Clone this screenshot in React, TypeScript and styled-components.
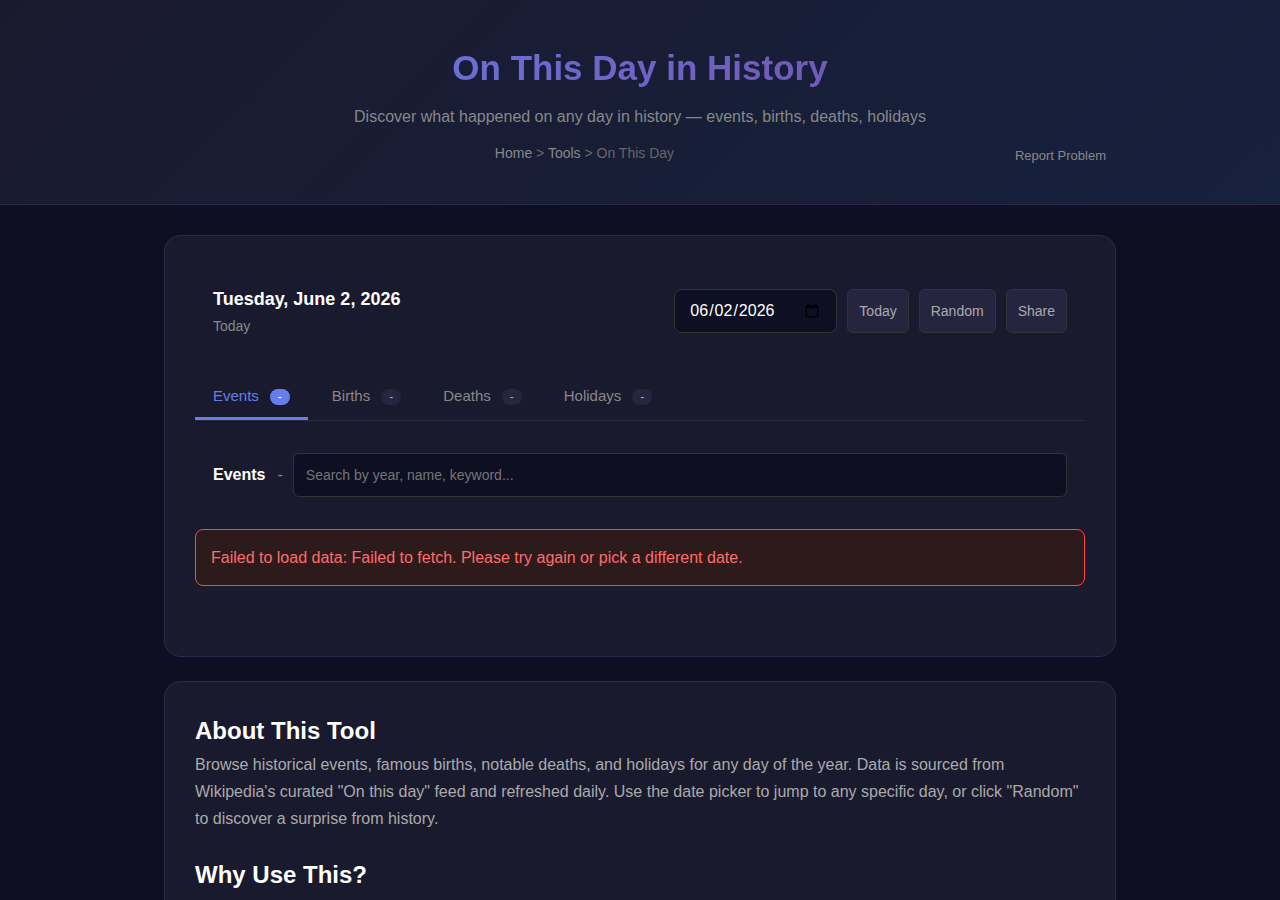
import React, { useState } from "react";
import styled, { createGlobalStyle } from "styled-components";

const GlobalStyle = createGlobalStyle`
  *, *::before, *::after { box-sizing: border-box; margin: 0; padding: 0; }
  html { background: #0f0f23; }
  body {
    font-family: "Liberation Sans", Arial, sans-serif;
    font-size: 16px;
    line-height: 26px;
    color: #fff;
    background: #0f0f23;
  }
  button, input { font-family: inherit; }
`;

const Header = styled.header`
  padding: 40px 24px;
  background: linear-gradient(135deg, #1a1a2e 0%, #16213e 100%);
  border-bottom: 1px solid #2a2a4a;
  text-align: center;
`;

const HeaderInner = styled.div`
  max-width: 952px;
  margin: 0 auto;
`;

const Title = styled.h1`
  font-size: 35px;
  line-height: 56px;
  background: linear-gradient(135deg, #667eea 0%, #764ba2 100%);
  -webkit-background-clip: text;
  background-clip: text;
  color: transparent;
`;

const Subtitle = styled.p`
  margin-top: 8px;
  color: #888;
`;

const HeaderRow = styled.div`
  display: flex;
  align-items: flex-end;
  margin-top: 12px;
`;

const Breadcrumb = styled.nav`
  flex: 1;
  font-size: 14px;
  line-height: 22px;
  color: #666;
`;

const CrumbLink = styled.a`
  color: #888;
  text-decoration: none;
`;

const ReportButton = styled.button`
  padding: 0 10px;
  border: 0;
  background: none;
  font-size: 13px;
  line-height: 16px;
  color: #888;
  cursor: pointer;
`;

const Main = styled.main`
  display: flex;
  flex-direction: column;
  gap: 24px;
  max-width: 1000px;
  margin: 0 auto;
  padding: 30px 24px;
`;

const Card = styled.section`
  padding: 30px;
  background: #1a1a2e;
  border: 1px solid #2a2a4a;
  border-radius: 16px;
`;

const DateBar = styled.div`
  display: flex;
  flex-wrap: wrap;
  align-items: center;
  justify-content: space-between;
  gap: 10px;
  padding: 18px;
`;

const DateHeading = styled.h2`
  font-size: 18px;
  line-height: 30px;
`;

const DateNote = styled.p`
  font-size: 14px;
  line-height: 24px;
  color: #888;
`;

const Controls = styled.div`
  display: flex;
  gap: 10px;
`;

const DateInput = styled.input`
  height: 44px;
  padding: 0 14px;
  background: #0f0f23;
  border: 1px solid #333;
  border-radius: 8px;
  font-size: 16px;
  color: #fff;
`;

const ActionButton = styled.button`
  height: 44px;
  padding: 0 11px;
  background: #252540;
  border: 1px solid #333;
  border-radius: 6px;
  font-size: 14px;
  color: #aaa;
  cursor: pointer;
`;

const TabList = styled.div`
  display: flex;
  gap: 6px;
  margin-top: 16px;
  border-bottom: 1px solid #2a2a3e;
`;

const Tab = styled.button<{ $active: boolean }>`
  display: flex;
  align-items: baseline;
  gap: 11px;
  height: 48px;
  padding: 15px 18px 0;
  background: none;
  border: 0;
  border-bottom: 3px solid ${(p) => (p.$active ? "#667eea" : "transparent")};
  font-size: 15px;
  color: ${(p) => (p.$active ? "#667eea" : "#888")};
  cursor: pointer;
`;

const Badge = styled.span<{ $active: boolean }>`
  padding: 0 8px;
  border-radius: 10px;
  font-size: 12px;
  line-height: 16px;
  background: ${(p) => (p.$active ? "#667eea" : "#252540")};
  color: ${(p) => (p.$active ? "#fff" : "#aaa")};
`;

const FilterRow = styled.div`
  display: flex;
  align-items: center;
  gap: 10px;
  padding: 32px 18px;
`;

const FilterLabel = styled.label`
  font-weight: 700;
  white-space: nowrap;
`;

const FilterCount = styled.span`
  margin-left: 12px;
  font-size: 16px;
  font-weight: 400;
  color: #888;
`;

const SearchInput = styled.input`
  flex: 1;
  min-width: 0;
  height: 44px;
  padding: 0 12px;
  background: #0f0f23;
  border: 1px solid #333;
  border-radius: 6px;
  font-size: 14px;
  color: #fff;

  &::placeholder { color: #757575; }
`;

const ErrorMessage = styled.div`
  margin-bottom: 40px;
  padding: 15px;
  background: #2d1b1b;
  border: 1px solid #ff4444;
  border-radius: 8px;
  line-height: 25px;
  color: #ff6b6b;
`;

const SectionHeading = styled.h2`
  font-size: 24px;
  line-height: 38px;
`;

const Paragraph = styled.p`
  margin: 1px 0 24px;
  line-height: 27px;
  color: #aaa;
`;

const TABS = ["Events", "Births", "Deaths", "Holidays"];

export default function App() {
  const [active, setActive] = useState("Events");
  const [date, setDate] = useState("2026-06-02");
  const [query, setQuery] = useState("");

  return (
    <>
      <GlobalStyle />
      <Header>
        <HeaderInner>
          <Title>On This Day in History</Title>
          <Subtitle>
            Discover what happened on any day in history — events, births, deaths, holidays
          </Subtitle>
          <HeaderRow>
            <Breadcrumb aria-label="Breadcrumb">
              <CrumbLink href="#home">Home</CrumbLink> &gt; <CrumbLink href="#tools">Tools</CrumbLink> &gt; On
              This Day
            </Breadcrumb>
            <ReportButton type="button">Report Problem</ReportButton>
          </HeaderRow>
        </HeaderInner>
      </Header>
      <Main>
        <Card>
          <DateBar>
            <div>
              <DateHeading>Tuesday, June 2, 2026</DateHeading>
              <DateNote>Today</DateNote>
            </div>
            <Controls>
              <DateInput
                type="date"
                aria-label="Date"
                value={date}
                onChange={(e) => setDate(e.target.value)}
              />
              <ActionButton type="button">Today</ActionButton>
              <ActionButton type="button">Random</ActionButton>
              <ActionButton type="button">Share</ActionButton>
            </Controls>
          </DateBar>
          <TabList role="tablist">
            {TABS.map((name) => (
              <Tab
                key={name}
                type="button"
                role="tab"
                aria-selected={active === name}
                $active={active === name}
                onClick={() => setActive(name)}
              >
                {name}
                <Badge $active={active === name}>-</Badge>
              </Tab>
            ))}
          </TabList>
          <FilterRow>
            <FilterLabel htmlFor="search">
              {active}
              <FilterCount>-</FilterCount>
            </FilterLabel>
            <SearchInput
              id="search"
              type="text"
              placeholder="Search by year, name, keyword..."
              value={query}
              onChange={(e) => setQuery(e.target.value)}
            />
          </FilterRow>
          <ErrorMessage role="alert">
            Failed to load data: Failed to fetch. Please try again or pick a different date.
          </ErrorMessage>
        </Card>
        <Card>
          <SectionHeading>About This Tool</SectionHeading>
          <Paragraph>
            Browse historical events, famous births, notable deaths, and holidays for any day of the
            year. Data is sourced from Wikipedia's curated "On this day" feed and refreshed daily.
            Use the date picker to jump to any specific day, or click "Random" to discover a surprise
            from history.
          </Paragraph>
          <SectionHeading>Why Use This?</SectionHeading>
        </Card>
      </Main>
    </>
  );
}
